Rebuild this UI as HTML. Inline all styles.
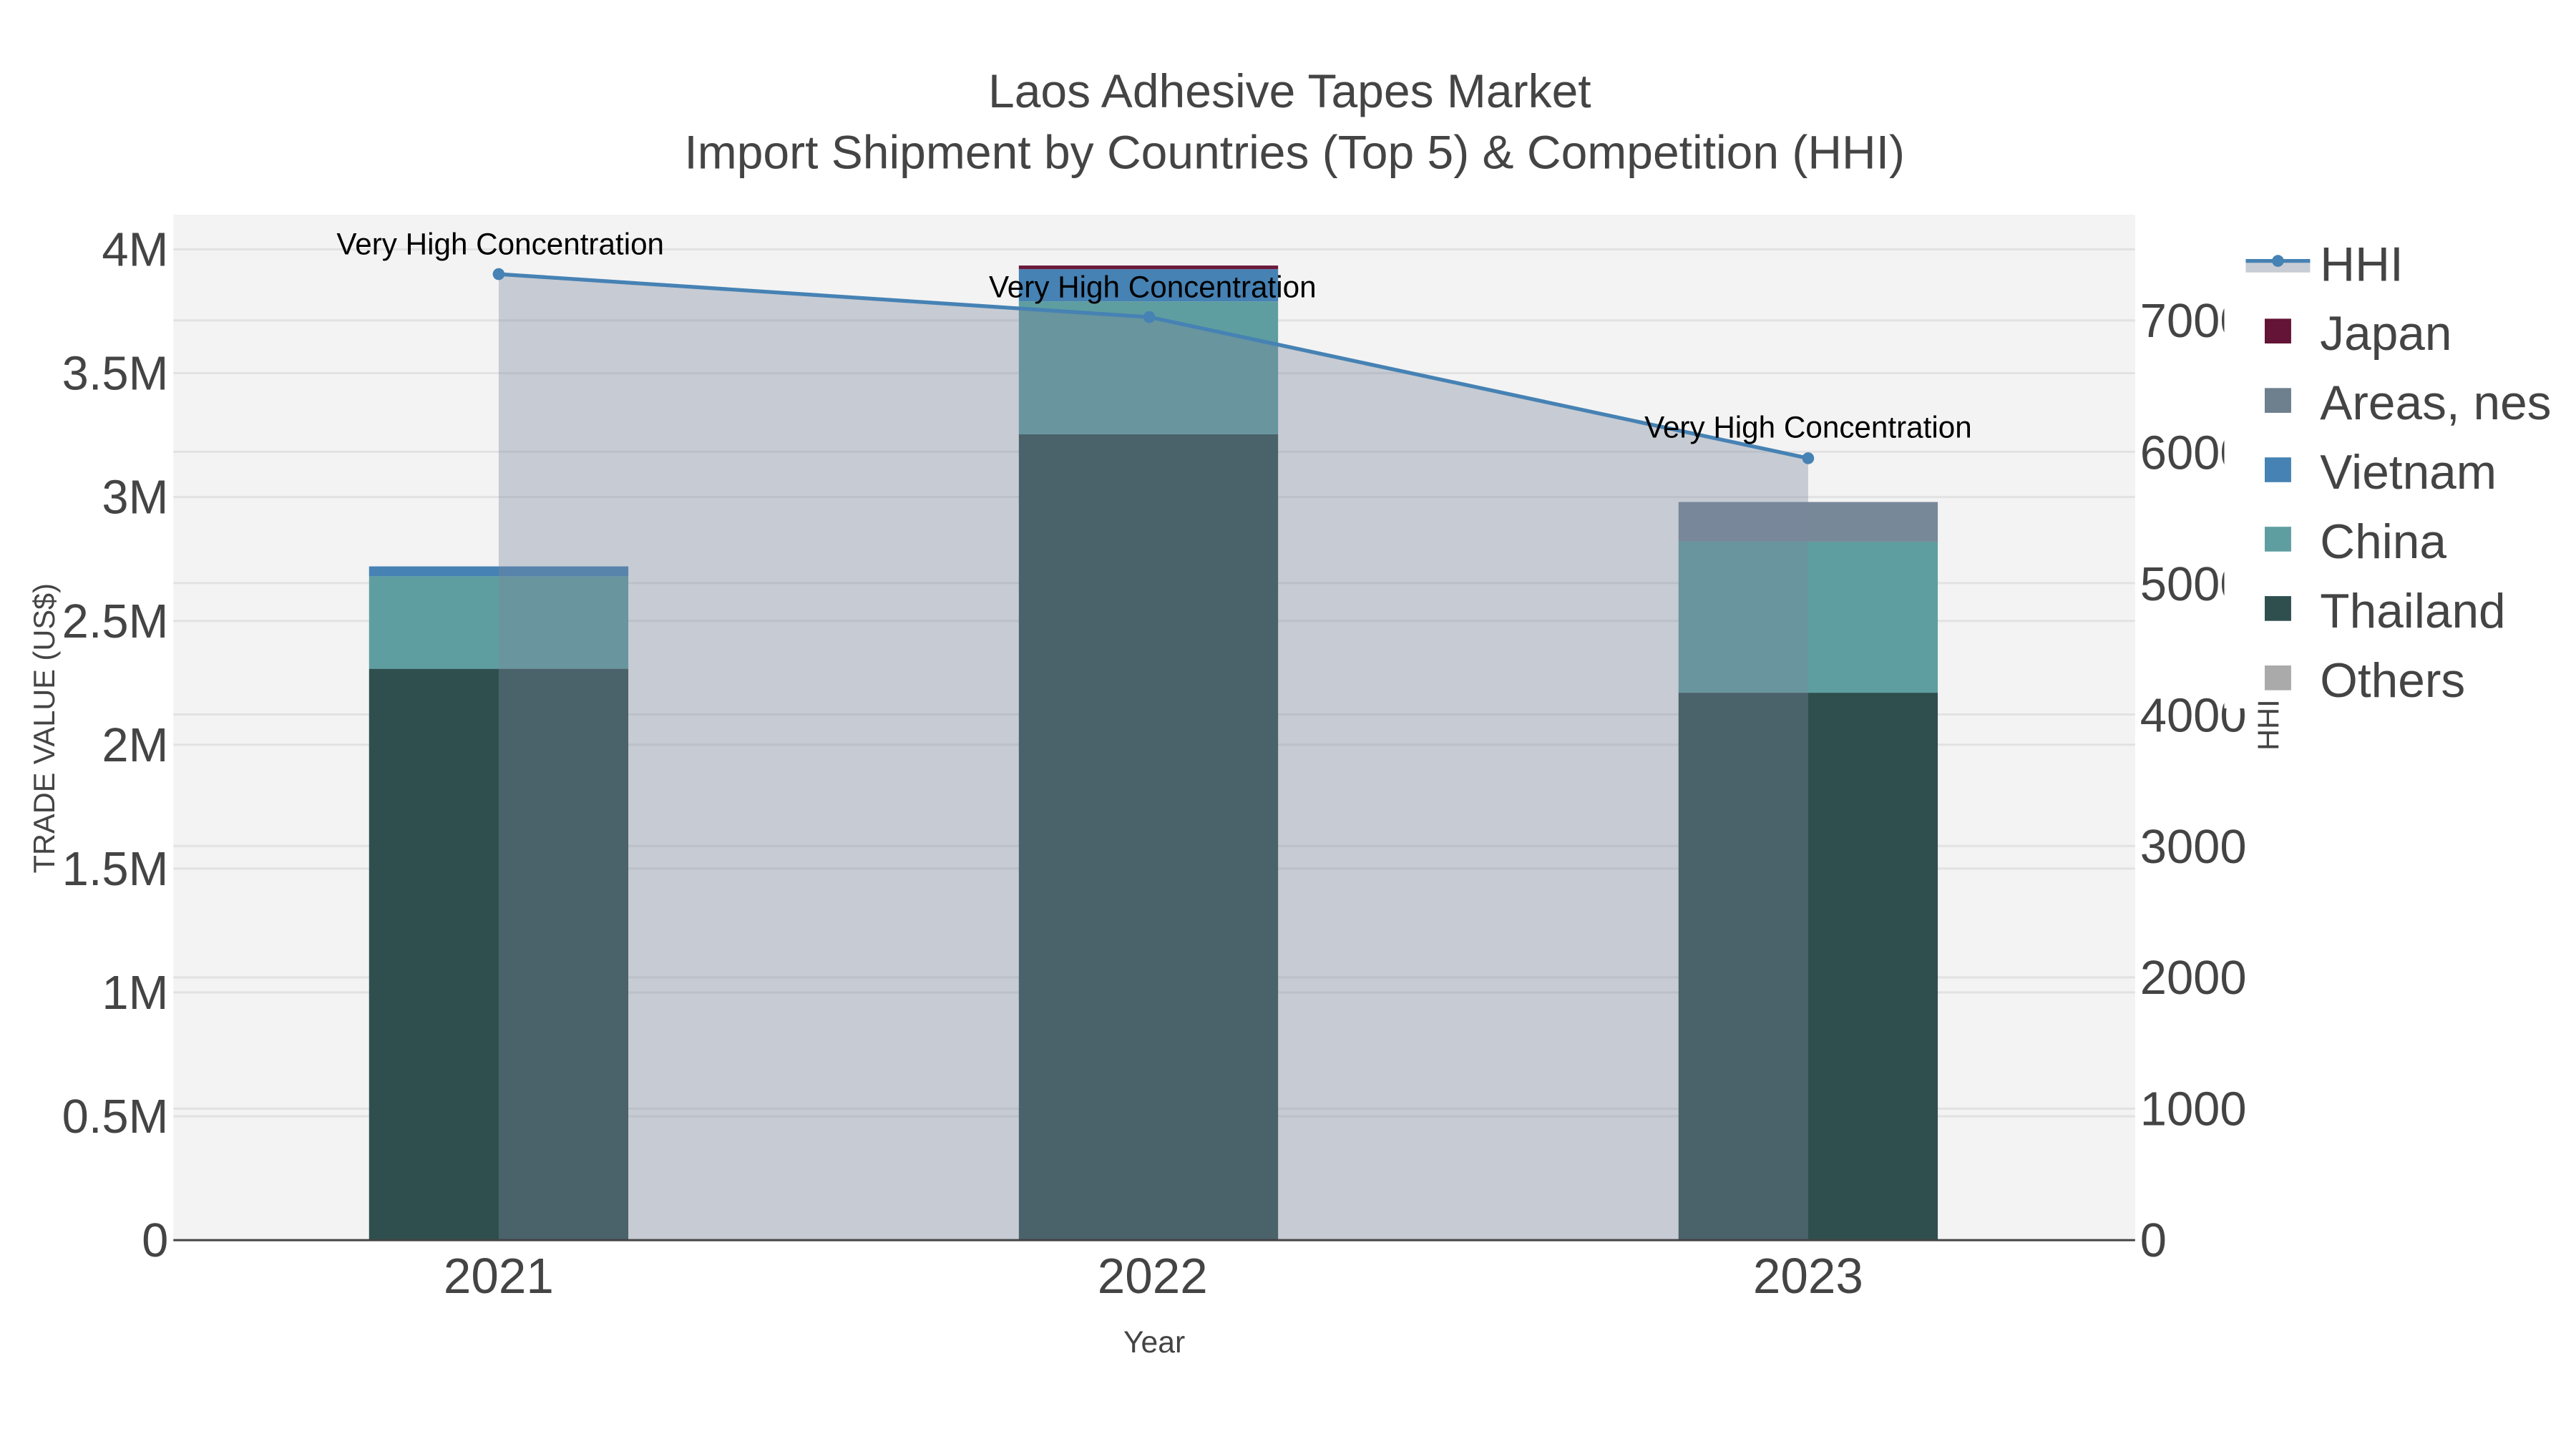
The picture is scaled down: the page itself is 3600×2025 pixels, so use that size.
<!DOCTYPE html>
<html><head><meta charset="utf-8"><style>
html,body{margin:0;padding:0;background:#fff;}
svg{display:block;}
text{font-family:"Liberation Sans",sans-serif;}
</style></head><body>
<svg width="3600" height="2025" viewBox="0 0 1560 877.5" xmlns="http://www.w3.org/2000/svg">
<rect x="0" y="0" width="1560" height="877.5" fill="#fff"/>
<rect x="105" y="130" width="1188" height="621" fill="#f3f3f3"/>
<g stroke="#e2e2e2" stroke-width="1.3">
<line x1="105" x2="1293" y1="676" y2="676"/><line x1="105" x2="1293" y1="601" y2="601"/>
<line x1="105" x2="1293" y1="526" y2="526"/><line x1="105" x2="1293" y1="451" y2="451"/>
<line x1="105" x2="1293" y1="376" y2="376"/><line x1="105" x2="1293" y1="301" y2="301"/>
<line x1="105" x2="1293" y1="226" y2="226"/><line x1="105" x2="1293" y1="151" y2="151"/>
<line x1="105" x2="1293" y1="671.4" y2="671.4"/><line x1="105" x2="1293" y1="591.9" y2="591.9"/>
<line x1="105" x2="1293" y1="512.3" y2="512.3"/><line x1="105" x2="1293" y1="432.7" y2="432.7"/>
<line x1="105" x2="1293" y1="353.1" y2="353.1"/><line x1="105" x2="1293" y1="273.6" y2="273.6"/>
<line x1="105" x2="1293" y1="194" y2="194"/>
</g>
<rect x="223.5" y="405" width="157" height="346" fill="#2f4f4f"/>
<rect x="223.5" y="349" width="157" height="56" fill="#5f9ea0"/>
<rect x="223.5" y="343" width="157" height="6" fill="#4682b4"/>
<rect x="617" y="263" width="157" height="488" fill="#2f4f4f"/>
<rect x="617" y="182.5" width="157" height="80.5" fill="#5f9ea0"/>
<rect x="617" y="163" width="157" height="19.5" fill="#4682b4"/>
<rect x="617" y="160.8" width="157" height="2.2" fill="#6b1a3a"/>
<rect x="1016.5" y="419.5" width="157" height="331.5" fill="#2f4f4f"/>
<rect x="1016.5" y="328" width="157" height="91.5" fill="#5f9ea0"/>
<rect x="1016.5" y="304" width="157" height="24" fill="#778899"/>
<polygon points="302,166 696,192 1095,277.5 1095,751 302,751" fill="rgb(122,132,156)" fill-opacity="0.36"/>
<polyline points="302,166 696,192 1095,277.5" fill="none" stroke="#4682b4" stroke-width="2.3"/>
<circle cx="302" cy="166" r="3.6" fill="#4682b4"/>
<circle cx="696" cy="192" r="3.6" fill="#4682b4"/>
<circle cx="1095" cy="277.5" r="3.6" fill="#4682b4"/>
<line x1="105" x2="1293" y1="751" y2="751" stroke="#444" stroke-width="1.3"/>
<g font-size="18.3" fill="#000" text-anchor="middle">
<text x="303" y="154">Very High Concentration</text>
<text x="698" y="180">Very High Concentration</text>
<text x="1095" y="265">Very High Concentration</text>
</g>
<g fill="#444" text-anchor="middle" font-size="28.6">
<text x="781" y="65">Laos Adhesive Tapes Market</text>
<text x="784" y="102">Import Shipment by Countries (Top 5) &amp; Competition (HHI)</text>
</g>
<g fill="#444" text-anchor="end" font-size="29">
<text x="102" y="761">0</text><text x="102" y="686">0.5M</text><text x="102" y="611">1M</text>
<text x="102" y="536">1.5M</text><text x="102" y="461">2M</text><text x="102" y="386">2.5M</text>
<text x="102" y="311">3M</text><text x="102" y="236">3.5M</text><text x="102" y="161">4M</text>
</g>
<g fill="#444" text-anchor="start" font-size="29">
<text x="1296" y="761">0</text><text x="1296" y="681.5">1000</text><text x="1296" y="602">2000</text>
<text x="1296" y="522.5">3000</text><text x="1296" y="443">4000</text><text x="1296" y="363.5">5000</text>
<text x="1296" y="284">6000</text><text x="1296" y="204">7000</text>
</g>
<g fill="#444" text-anchor="middle" font-size="30">
<text x="302" y="783">2021</text><text x="698" y="783">2022</text><text x="1095" y="783">2023</text>
</g>
<text x="699" y="819" fill="#444" font-size="18.5" text-anchor="middle">Year</text>
<text transform="translate(33,441) rotate(-90)" fill="#444" font-size="18" text-anchor="middle">TRADE VALUE (US$)</text>
<rect x="1347" y="135" width="213" height="294" fill="#fff"/>
<text transform="translate(1380,439) rotate(-90)" fill="#444" font-size="18" text-anchor="middle">HHI</text>
<rect x="1360" y="157" width="39" height="8" fill="#c8ccd4"/>
<line x1="1360" x2="1399" y1="158" y2="158" stroke="#4682b4" stroke-width="2.3"/>
<circle cx="1379.5" cy="158" r="3.6" fill="#4682b4"/>
<rect x="1371.5" y="193" width="16" height="15" fill="#641436"/>
<rect x="1371.5" y="235" width="16" height="15" fill="#6e7f8e"/>
<rect x="1371.5" y="277" width="16" height="15" fill="#4682b4"/>
<rect x="1371.5" y="319" width="16" height="15" fill="#5f9ea0"/>
<rect x="1371.5" y="361" width="16" height="15" fill="#2f4f4f"/>
<rect x="1371.5" y="403" width="16" height="15" fill="#aaaaaa"/>
<g fill="#444" font-size="29.3">
<text x="1405" y="170">HHI</text>
<text x="1405" y="212">Japan</text>
<text x="1405" y="254">Areas, nes</text>
<text x="1405" y="296">Vietnam</text>
<text x="1405" y="338">China</text>
<text x="1405" y="380">Thailand</text>
<text x="1405" y="422">Others</text>
</g>
</svg>
</body></html>
